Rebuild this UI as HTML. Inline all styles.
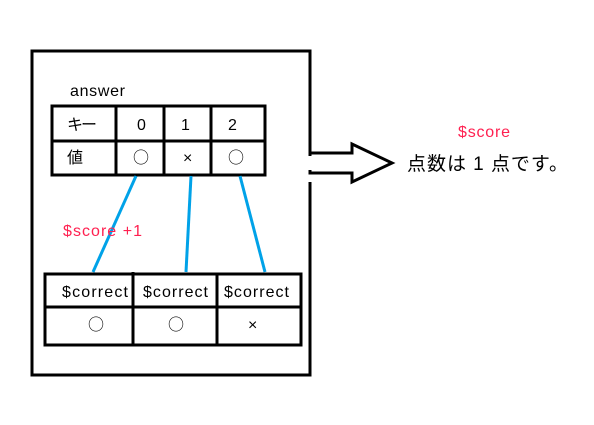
<!DOCTYPE html>
<html><head><meta charset="utf-8"><style>
body{margin:0;background:#fff;width:594px;height:420px;overflow:hidden}
svg text{font-family:"Liberation Sans","Noto Sans CJK JP",sans-serif}
svg text.c{font-family:"Noto Sans CJK JP",sans-serif}
</style></head><body>
<svg width="594" height="420" xmlns="http://www.w3.org/2000/svg">
<g stroke="#000" stroke-width="3" fill="none">
<polyline points="310,153 310,51 32,51 32,375 310,375 310,182"/>
<polygon points="310,153 352,153 352,144 392,163 352,182 352,173 310,173" fill="#fff"/>
<line x1="310" y1="156" x2="310" y2="170" stroke="#fff" stroke-width="3"/>
<rect x="52" y="106" width="213" height="69"/>
<line x1="52" y1="141" x2="265" y2="141"/>
<line x1="116" y1="106" x2="116" y2="175"/>
<line x1="164" y1="106" x2="164" y2="175"/>
<line x1="211" y1="106" x2="211" y2="175"/>
<rect x="45" y="274" width="256" height="71"/>
<line x1="45" y1="307" x2="301" y2="307"/>
<line x1="133" y1="272" x2="133" y2="345"/>
<line x1="217" y1="274" x2="217" y2="345"/>
</g>
<g stroke="#00a2e8" stroke-width="3">
<line x1="136" y1="176" x2="93" y2="272"/>
<line x1="191" y1="176" x2="186" y2="272"/>
<line x1="240" y1="176" x2="265" y2="272"/>
</g>
<g font-size="16" fill="#000">
<text x="70" y="96" textLength="55">answer</text>
<text x="67" y="130" textLength="30">キー</text>
<text x="137" y="130">0</text>
<text x="181" y="130">1</text>
<text x="228" y="130">2</text>
<text x="67" y="163">値</text>
<text class="c" x="133" y="163">○</text>
<text x="183" y="163">×</text>
<text class="c" x="228" y="163">○</text>
<text x="62" y="297" textLength="66">$correct</text>
<text x="143" y="297" textLength="65">$correct</text>
<text x="224" y="297" textLength="65">$correct</text>
<text class="c" x="88" y="330">○</text>
<text class="c" x="168" y="330">○</text>
<text x="248" y="330">×</text>
</g>
<g font-size="16" fill="#ff2050">
<text x="63" y="236" textLength="79">$score +1</text>
<text x="458" y="137" textLength="52">$score</text>
</g>
<text x="407" y="170" font-size="19" fill="#000" textLength="161">点数は 1 点です。</text>
</svg>
</body></html>
